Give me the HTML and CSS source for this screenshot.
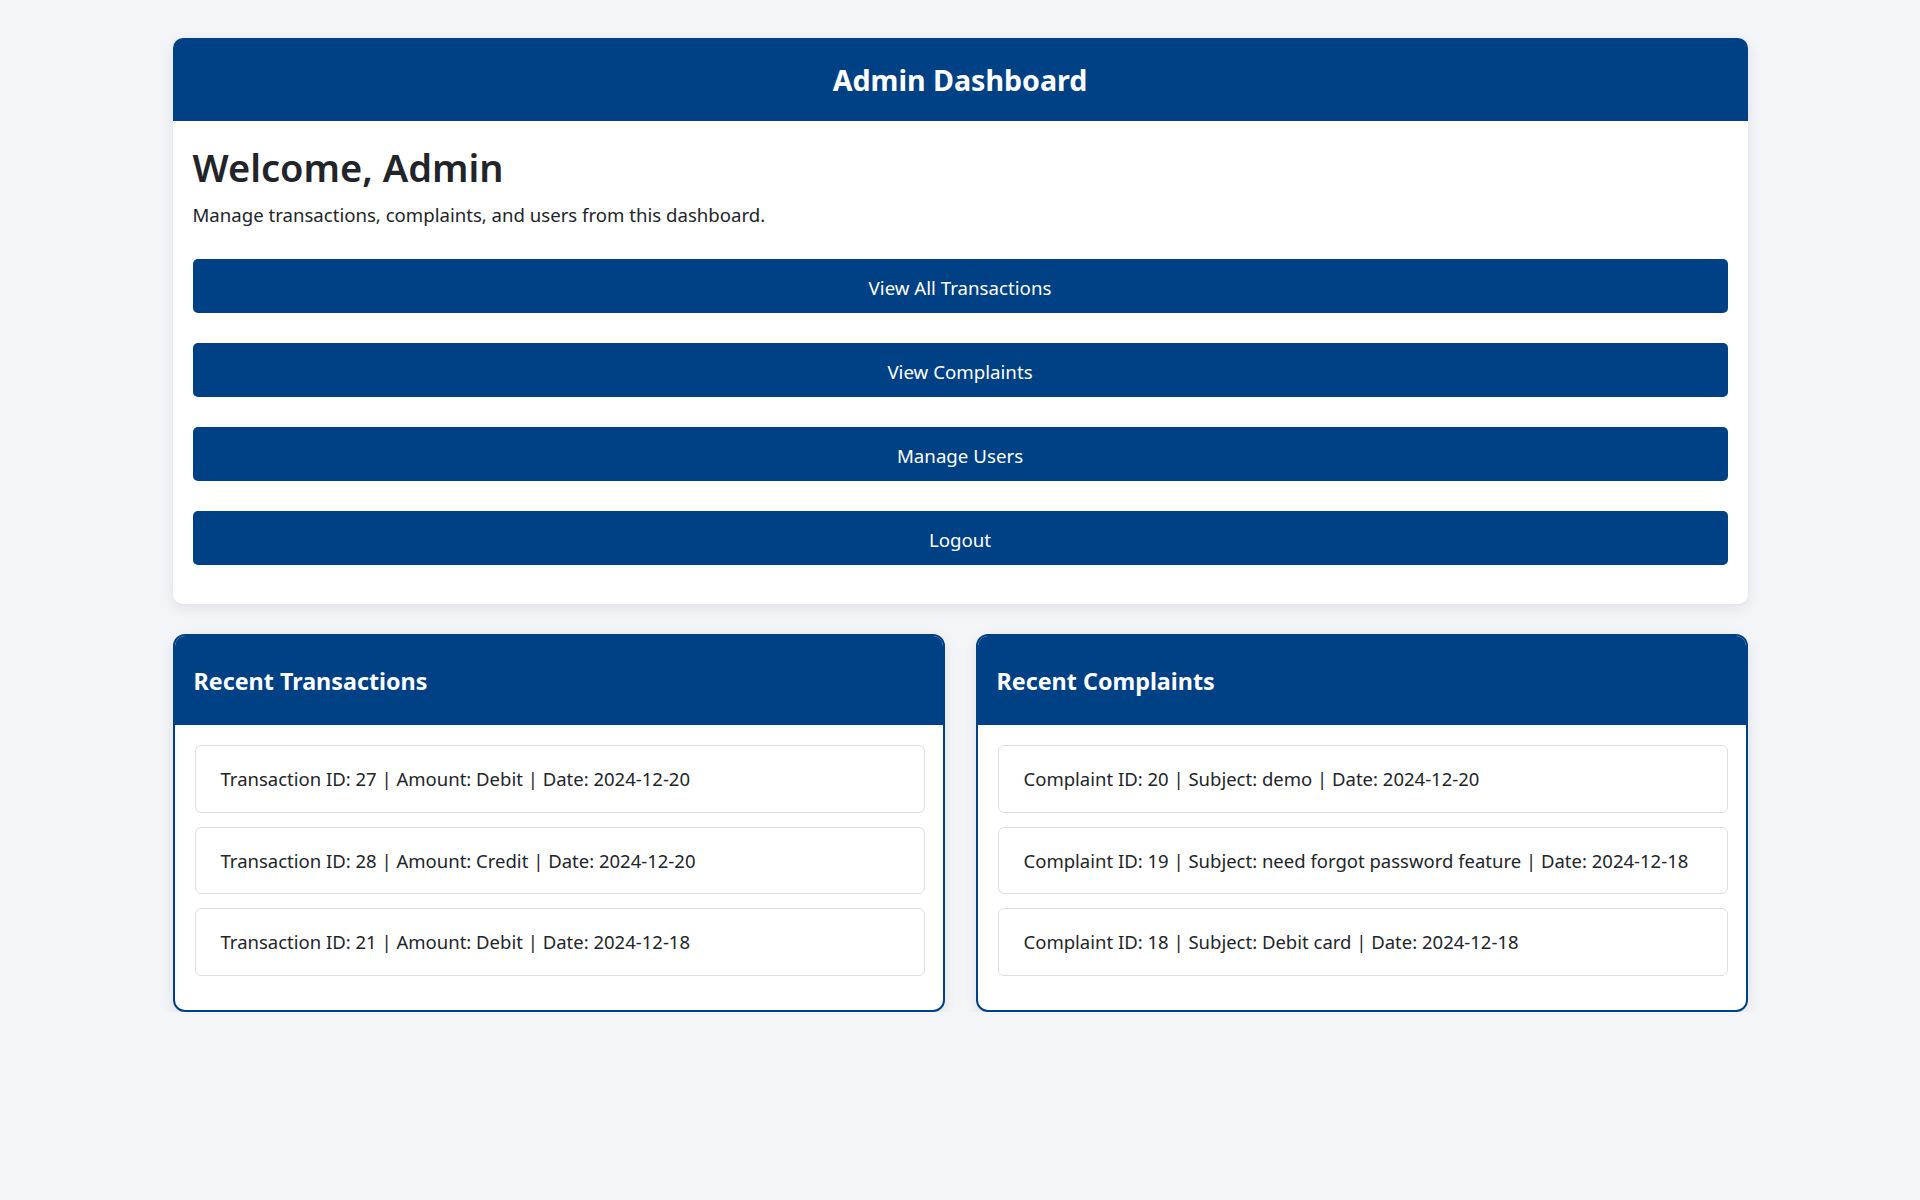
FILE: index.html
```html
<!DOCTYPE html>
<html lang="en">
<head>
<meta charset="utf-8">
<title>Admin Dashboard</title>
<link rel="stylesheet" href="styles.css">
</head>
<body>
  <div class="page">
    <section class="main-card">
      <header class="main-header">
        <h1 class="main-title">Admin Dashboard</h1>
      </header>
      <div class="main-body">
        <h2 class="welcome">Welcome, Admin</h2>
        <p class="intro">Manage transactions, complaints, and users from this dashboard.</p>
        <nav class="actions">
          <a class="btn" href="#">View All Transactions</a>
          <a class="btn" href="#">View Complaints</a>
          <a class="btn" href="#">Manage Users</a>
          <a class="btn" href="#">Logout</a>
        </nav>
      </div>
    </section>

    <div class="panels">
      <section class="panel">
        <header class="panel-header"><h3 class="panel-title">Recent Transactions</h3></header>
        <ul class="panel-list">
          <li class="panel-item">Transaction ID: 27 | Amount: Debit | Date: 2024-12-20</li>
          <li class="panel-item">Transaction ID: 28 | Amount: Credit | Date: 2024-12-20</li>
          <li class="panel-item">Transaction ID: 21 | Amount: Debit | Date: 2024-12-18</li>
        </ul>
      </section>
      <section class="panel">
        <header class="panel-header"><h3 class="panel-title">Recent Complaints</h3></header>
        <ul class="panel-list">
          <li class="panel-item">Complaint ID: 20 | Subject: demo | Date: 2024-12-20</li>
          <li class="panel-item">Complaint ID: 19 | Subject: need forgot password feature | Date: 2024-12-18</li>
          <li class="panel-item">Complaint ID: 18 | Subject: Debit card | Date: 2024-12-18</li>
        </ul>
      </section>
    </div>
  </div>
</body>
</html>
```

FILE: styles.css
```css
* { box-sizing: border-box; }

html, body {
  margin: 0;
  padding: 0;
}

body {
  background: #f4f5f9;
  font-family: "Noto Sans", "Open Sans", "Liberation Sans", sans-serif;
  color: #212529;
  font-size: 18.6px;
}

.page {
  width: 1575px;
  margin: 38px auto 0;
}

.main-card {
  background: #ffffff;
  border-radius: 10px;
  box-shadow: 0 4px 14px rgba(0, 0, 0, 0.09);
  overflow: hidden;
}

.main-header {
  background: #004085;
  height: 83px;
  display: flex;
  align-items: center;
  justify-content: center;
}

.main-title {
  margin: 0;
  color: #ffffff;
  font-size: 28.6px;
  font-weight: 700;
  line-height: 36px;
}

.main-body {
  padding: 22px 20px 39px;
}

.welcome {
  margin: 0 0 11px;
  font-size: 38px;
  line-height: 48px;
  font-weight: 600;
  color: #212529;
}

.intro {
  margin: 0 0 31px;
  font-size: 18.6px;
  line-height: 26px;
}

.actions {
  display: flex;
  flex-direction: column;
  gap: 30px;
}

.btn {
  display: flex;
  align-items: center;
  justify-content: center;
  height: 54px;
  padding-top: 2px;
  background: #004085;
  color: #ffffff;
  border-radius: 5px;
  text-decoration: none;
  font-size: 18.7px;
}

.panels {
  display: grid;
  grid-template-columns: 1fr 1fr;
  gap: 31px;
  margin-top: 30px;
}

.panel {
  background: #ffffff;
  border: 2px solid #004085;
  border-radius: 12px;
  box-shadow: 0 4px 14px rgba(0, 0, 0, 0.09);
  overflow: hidden;
}

.panel-header {
  background: #004085;
  height: 89px;
  display: flex;
  align-items: center;
  padding: 0 19px;
}

.panel-title {
  margin: 0;
  color: #ffffff;
  font-size: 23.3px;
  font-weight: 700;
  line-height: 32px;
}

.panel-list {
  list-style: none;
  margin: 0;
  padding: 20px 18px 20px 20px;
}

.panel-item {
  border: 1px solid #dedede;
  border-radius: 6px;
  padding: 20px 25px;
  line-height: 25.6px;
  margin-bottom: 14px;
  font-size: 18.5px;
}
```
